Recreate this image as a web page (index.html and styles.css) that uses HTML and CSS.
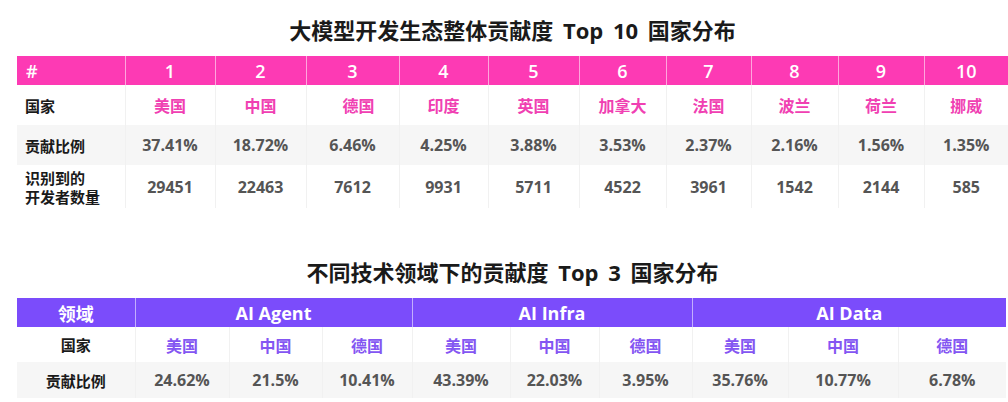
FILE: index.html
```html
<!DOCTYPE html>
<html lang="zh">
<head>
<meta charset="utf-8">
<link rel="stylesheet" href="styles.css">
</head>
<body>
<div class="page">
  <h2 class="title t1">大模型开发生态整体贡献度 Top 10 国家分布</h2>
  <table class="tbl pink">
    <colgroup>
      <col class="c-label1"><col class="w90"><col class="w91"><col class="w93"><col class="w89"><col class="w91"><col class="w87"><col class="w85"><col class="w87"><col class="w86"><col class="w84">
    </colgroup>
    <thead>
      <tr class="head"><th class="lbl">#</th><th>1</th><th>2</th><th>3</th><th>4</th><th>5</th><th>6</th><th>7</th><th>8</th><th>9</th><th>10</th></tr>
    </thead>
    <tbody>
      <tr class="r-country"><th class="lbl">国家</th><td>美国</td><td>中国</td><td class="shift">德国</td><td>印度</td><td>英国</td><td>加拿大</td><td>法国</td><td>波兰</td><td>荷兰</td><td>挪威</td></tr>
      <tr class="r-gray"><th class="lbl">贡献比例</th><td>37.41%</td><td>18.72%</td><td>6.46%</td><td>4.25%</td><td>3.88%</td><td>3.53%</td><td>2.37%</td><td>2.16%</td><td>1.56%</td><td>1.35%</td></tr>
      <tr class="r-dev"><th class="lbl">识别到的<br>开发者数量</th><td>29451</td><td>22463</td><td>7612</td><td>9931</td><td>5711</td><td>4522</td><td>3961</td><td>1542</td><td>2144</td><td>585</td></tr>
    </tbody>
  </table>

  <h2 class="title t2">不同技术领域下的贡献度 Top 3 国家分布</h2>
  <table class="tbl purple">
    <colgroup>
      <col class="w118"><col class="w94"><col class="w93"><col class="w90"><col class="w98"><col class="w89"><col class="w93"><col class="w96"><col class="w110"><col class="w108">
    </colgroup>
    <thead>
      <tr class="head"><th>领域</th><th colspan="3">AI Agent</th><th colspan="3">AI Infra</th><th colspan="3">AI Data</th></tr>
    </thead>
    <tbody>
      <tr class="r-country2"><th>国家</th><td>美国</td><td>中国</td><td>德国</td><td>美国</td><td>中国</td><td>德国</td><td>美国</td><td>中国</td><td>德国</td></tr>
      <tr class="r-gray2"><th>贡献比例</th><td>24.62%</td><td>21.5%</td><td>10.41%</td><td>43.39%</td><td>22.03%</td><td>3.95%</td><td>35.76%</td><td>10.77%</td><td>6.78%</td></tr>
    </tbody>
  </table>
</div>
</body>
</html>
```

FILE: styles.css
```css
html, body {
  margin: 0;
  padding: 0;
  background: #ffffff;
}
body {
  font-family: "Open Sans", "Noto Sans CJK SC", sans-serif;
  color: #222;
}
.page {
  padding-left: 17px;
  width: 991px;
}
.title {
  margin: 0;
  font-family: "Open Sans", "Noto Sans CJK SC", sans-serif;
  font-weight: 700;
  font-size: 22px;
  line-height: 28px;
  text-align: center;
  color: #1a1a1a;
  word-spacing: 4px;
}
.t1 {
  padding-top: 16px;
  margin-bottom: 12px;
}
.t2 {
  margin-top: 50px;
  margin-bottom: 12px;
}
.tbl {
  border-collapse: collapse;
  table-layout: fixed;
  width: 991px;
}
.tbl.purple { width: 989px; }
.tbl th, .tbl td {
  padding: 0;
  text-align: center;
  font-weight: 700;
  font-size: 16px;
  color: #555;
  border-left: 1px solid #f1f1f1;
}
.tbl th:first-child, .tbl td:first-child { border-left: none; }
.tbl .head th {
  color: #fff;
  font-size: 18px;
  font-weight: 600;
  height: 29px;
  border-left: 1px solid rgba(255,255,255,0.55);
}
.purple .head th { font-weight: 700; }
.tbl .head th:first-child { border-left: none; }
.pink .head th { background: #fd3ab4; }
.purple .head th { background: #7b4cfb; }

.tbl tbody th {
  color: #1a1a1a;
  font-family: "Noto Sans CJK SC", sans-serif;
  font-size: 15px;
  font-weight: 700;
}
.pink .lbl { text-align: left; padding-left: 8px; }
.pink .head .lbl { padding-left: 9px; }

.r-country th, .r-country td { height: 40px; }
.r-country td { color: #f040b2; font-family: "Noto Sans CJK SC", sans-serif; }
.r-country td.shift { padding-left: 12px; }
.r-gray th, .r-gray td { height: 40px; background: #f6f6f6; }
.r-dev th, .r-dev td { height: 43px; }
.r-dev th { line-height: 19px; }

.r-country2 th, .r-country2 td { height: 35px; }
.r-country2 td { color: #8456f2; font-family: "Noto Sans CJK SC", sans-serif; }
.r-gray2 th, .r-gray2 td { height: 36px; background: #f6f6f6; }

.c-label1 { width: 108px; }
.w84 { width: 84px; } .w85 { width: 85px; } .w86 { width: 86px; } .w87 { width: 87px; }
.w89 { width: 89px; } .w90 { width: 90px; } .w91 { width: 91px; } .w93 { width: 93px; }
.w94 { width: 94px; } .w96 { width: 96px; } .w98 { width: 98px; }
.w108 { width: 108px; } .w110 { width: 110px; } .w118 { width: 118px; }
```
